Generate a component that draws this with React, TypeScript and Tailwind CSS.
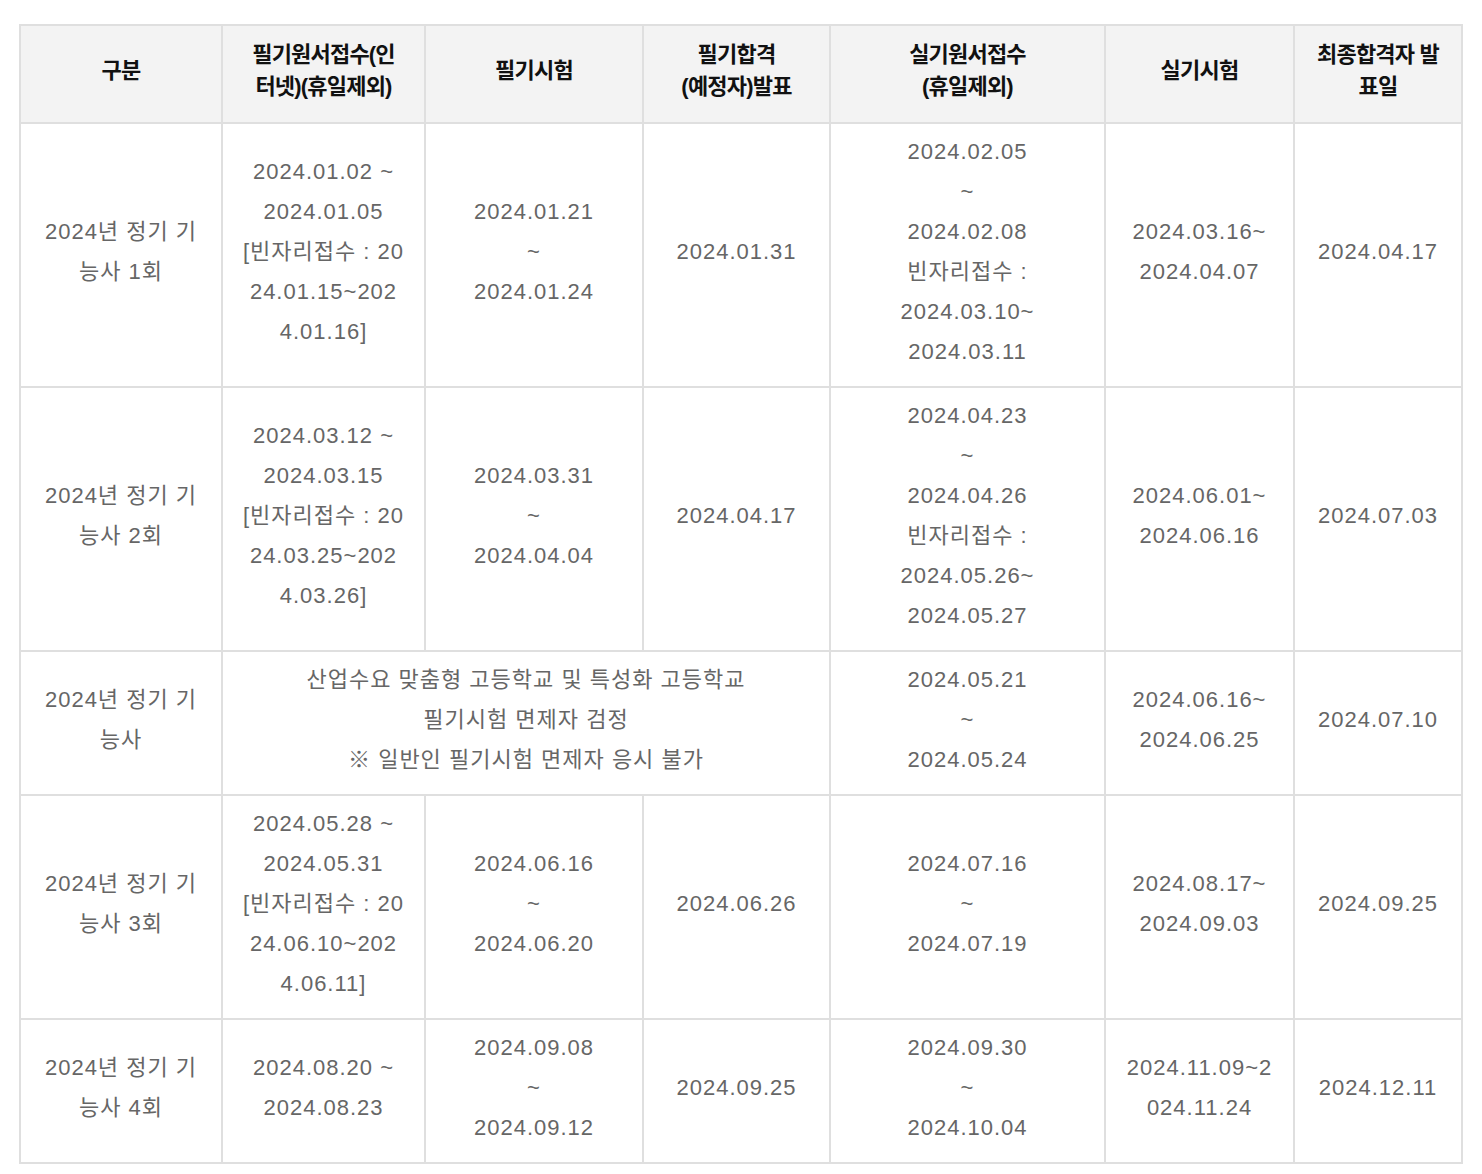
const font = { fontFamily: '"Liberation Sans", "Noto Sans CJK KR", sans-serif' };

type Cell = { lines: string[]; span?: number };

const headers: string[][] = [
  ["구분"],
  ["필기원서접수(인", "터넷)(휴일제외)"],
  ["필기시험"],
  ["필기합격", "(예정자)발표"],
  ["실기원서접수", "(휴일제외)"],
  ["실기시험"],
  ["최종합격자 발", "표일"],
];

const rows: Cell[][] = [
  [
    { lines: ["2024년 정기 기", "능사 1회"] },
    { lines: ["2024.01.02 ~", "2024.01.05", "[빈자리접수 : 20", "24.01.15~202", "4.01.16]"] },
    { lines: ["2024.01.21", "~", "2024.01.24"] },
    { lines: ["2024.01.31"] },
    { lines: ["2024.02.05", "~", "2024.02.08", "빈자리접수 :", "2024.03.10~", "2024.03.11"] },
    { lines: ["2024.03.16~", "2024.04.07"] },
    { lines: ["2024.04.17"] },
  ],
  [
    { lines: ["2024년 정기 기", "능사 2회"] },
    { lines: ["2024.03.12 ~", "2024.03.15", "[빈자리접수 : 20", "24.03.25~202", "4.03.26]"] },
    { lines: ["2024.03.31", "~", "2024.04.04"] },
    { lines: ["2024.04.17"] },
    { lines: ["2024.04.23", "~", "2024.04.26", "빈자리접수 :", "2024.05.26~", "2024.05.27"] },
    { lines: ["2024.06.01~", "2024.06.16"] },
    { lines: ["2024.07.03"] },
  ],
  [
    { lines: ["2024년 정기 기", "능사"] },
    {
      lines: ["산업수요 맞춤형 고등학교 및 특성화 고등학교", "필기시험 면제자 검정", "※ 일반인 필기시험 면제자 응시 불가"],
      span: 3,
    },
    { lines: ["2024.05.21", "~", "2024.05.24"] },
    { lines: ["2024.06.16~", "2024.06.25"] },
    { lines: ["2024.07.10"] },
  ],
  [
    { lines: ["2024년 정기 기", "능사 3회"] },
    { lines: ["2024.05.28 ~", "2024.05.31", "[빈자리접수 : 20", "24.06.10~202", "4.06.11]"] },
    { lines: ["2024.06.16", "~", "2024.06.20"] },
    { lines: ["2024.06.26"] },
    { lines: ["2024.07.16", "~", "2024.07.19"] },
    { lines: ["2024.08.17~", "2024.09.03"] },
    { lines: ["2024.09.25"] },
  ],
  [
    { lines: ["2024년 정기 기", "능사 4회"] },
    { lines: ["2024.08.20 ~", "2024.08.23"] },
    { lines: ["2024.09.08", "~", "2024.09.12"] },
    { lines: ["2024.09.25"] },
    { lines: ["2024.09.30", "~", "2024.10.04"] },
    { lines: ["2024.11.09~2", "024.11.24"] },
    { lines: ["2024.12.11"] },
  ],
];

const widths = [202, 203, 218, 187, 275, 189, 168];

export default function App() {
  return (
    <div className="bg-white min-h-screen pt-6 pl-[19px]" style={font}>
      <table className="table-fixed border-collapse border-2 border-[#dfdfdf] w-[1444px]">
        <colgroup>
          {widths.map((w, i) => (
            <col key={i} style={{ width: w }} />
          ))}
        </colgroup>
        <thead>
          <tr className="bg-[#f3f3f3]">
            {headers.map((h, i) => (
              <th
                key={i}
                className="border-2 border-[#dfdfdf] h-[98px] px-1 pb-[6px] text-center align-middle text-[22px] leading-[32px] font-bold text-[#111] tracking-[-0.8px] whitespace-nowrap"
              >
                {h.map((l, j) => (
                  <div key={j}>{l}</div>
                ))}
              </th>
            ))}
          </tr>
        </thead>
        <tbody>
          {rows.map((r, i) => (
            <tr key={i}>
              {r.map((c, j) => (
                <td
                  key={j}
                  colSpan={c.span}
                  className="border-2 border-[#dfdfdf] pt-[8px] pb-[14px] px-1 text-center align-middle text-[22px] leading-[40px] text-[#666] tracking-[1px] whitespace-nowrap"
                >
                  {c.lines.map((l, k) => (
                    <div key={k}>{l}</div>
                  ))}
                </td>
              ))}
            </tr>
          ))}
        </tbody>
      </table>
    </div>
  );
}
